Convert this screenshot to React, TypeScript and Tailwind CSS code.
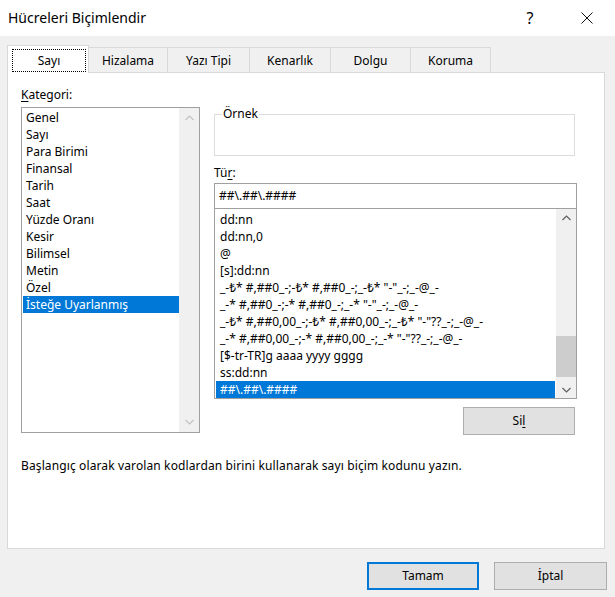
import React from "react";

const font = { fontFamily: '"Segoe UI", "Noto Sans", "Liberation Sans", sans-serif' };

const categories = [
  "Genel",
  "Sayı",
  "Para Birimi",
  "Finansal",
  "Tarih",
  "Saat",
  "Yüzde Oranı",
  "Kesir",
  "Bilimsel",
  "Metin",
  "Özel",
  "İsteğe Uyarlanmış",
];

const formats = [
  "dd:nn",
  "dd:nn,0",
  "@",
  "[s]:dd:nn",
  '_-₺* #,##0_-;-₺* #,##0_-;_-₺* "-"_-;_-@_-',
  '_-* #,##0_-;-* #,##0_-;_-* "-"_-;_-@_-',
  '_-₺* #,##0,00_-;-₺* #,##0,00_-;_-₺* "-"??_-;_-@_-',
  '_-* #,##0,00_-;-* #,##0,00_-;_-* "-"??_-;_-@_-',
  "[$-tr-TR]g aaaa yyyy gggg",
  "ss:dd:nn",
  "##\\.##\\.####",
];

const tabs = [
  { label: "Hizalama", w: "w-[79px]" },
  { label: "Yazı Tipi", w: "w-[82px]" },
  { label: "Kenarlık", w: "w-[81px]" },
  { label: "Dolgu", w: "w-[80px]" },
  { label: "Koruma", w: "w-[80px]" },
];

function Chevron({ up, color }: { up?: boolean; color: string }) {
  return (
    <svg width="9" height="6" viewBox="0 0 9 6">
      <polyline
        points={up ? "0.5,5 4.5,1 8.5,5" : "0.5,1 4.5,5 8.5,1"}
        fill="none"
        stroke={color}
        strokeWidth="1.2"
      />
    </svg>
  );
}

export default function App() {
  return (
    <div className="w-[615px] h-[597px] bg-[#f0f0f0] flex flex-col text-[12px] text-black overflow-hidden" style={font}>
      {/* Title bar */}
      <div className="h-[36px] bg-white flex items-center shrink-0">
        <span className="pl-[8px] text-[14px] leading-[20px]">Hücreleri Biçimlendir</span>
        <span className="ml-auto w-[20px] text-center text-[16px] leading-[20px] mr-[41px]">?</span>
        <svg width="12" height="12" viewBox="0 0 12 12" className="mr-[22px]">
          <path d="M0.5 0.5 L11.5 11.5 M11.5 0.5 L0.5 11.5" stroke="#111" strokeWidth="1" />
        </svg>
      </div>

      {/* Tabs */}
      <div className="mt-[9px] ml-[7px] flex items-end h-[27px]">
        <div className="relative z-10 -mb-px w-[82px] h-[28px] bg-white border border-b-0 border-[#d9d9d9]">
          <div className="ml-[4px] mt-[3px] w-[74px] h-[23px] border border-dotted border-black flex items-center justify-center">
            <span className="pt-[1px]">Sayı</span>
          </div>
        </div>
        {tabs.map((t) => (
          <div
            key={t.label}
            className={`${t.w} h-[25px] border-t border-r border-[#d9d9d9] flex items-center justify-center pt-[2px]`}
          >
            {t.label}
          </div>
        ))}
      </div>

      {/* Panel */}
      <div className="ml-[7px] w-[598px] h-[477px] bg-white border border-[#d9d9d9] pl-[13px] pt-[13px] flex flex-col shrink-0">
        <div className="flex gap-[14px]">
          {/* Left column */}
          <div className="w-[179px] flex flex-col">
            <div className="leading-[17px] h-[17px]">
              <span className="underline underline-offset-2">K</span>ategori:
            </div>
            <div className="mt-[4px] h-[326px] border border-[#a0a0a0] flex">
              <div className="flex-1 pt-[1px] pl-[1px]">
                {categories.map((c, i) => (
                  <div
                    key={c}
                    className={`h-[17px] leading-[17px] pl-[3px] ${i === categories.length - 1 ? "bg-[#0078d7] text-white" : ""}`}
                  >
                    {c}
                  </div>
                ))}
              </div>
              <div className="w-[20px] bg-[#f0f0f0] flex flex-col items-center justify-between py-[7px]">
                <Chevron up color="#c2c2c2" />
                <Chevron color="#c2c2c2" />
              </div>
            </div>
          </div>

          {/* Right column */}
          <div className="w-[363px] flex flex-col">
            <div className="relative mt-[28px] w-[361px] h-[42px] border border-[#dcdcdc]">
              <span className="absolute left-[7px] -top-[10px] bg-white px-[1px] leading-[17px]">Örnek</span>
            </div>
            <div className="mt-[8px] h-[17px] leading-[17px]">
              Tü<span className="underline underline-offset-2">r</span>:
            </div>
            <div className="mt-[2px] h-[26px] border border-[#a0a0a0] flex items-center pl-[4px]">
              ##\.##\.####
            </div>
            <div className="h-[190px] border border-t-0 border-[#a0a0a0] flex">
              <div className="flex-1 pt-[2px] px-[1px] overflow-hidden">
                {formats.map((f, i) => (
                  <div
                    key={f}
                    className={`h-[17px] leading-[17px] pl-[4px] whitespace-nowrap ${i === formats.length - 1 ? "bg-[#0078d7] text-white" : ""}`}
                  >
                    {f}
                  </div>
                ))}
              </div>
              <div className="w-[20px] bg-[#f0f0f0] flex flex-col">
                <div className="h-[17px] flex items-center justify-center">
                  <Chevron up color="#606060" />
                </div>
                <div className="flex-1 flex flex-col justify-end pb-[4px]">
                  <div className="h-[41px] bg-[#cdcdcd]" />
                </div>
                <div className="h-[17px] flex items-center justify-center">
                  <Chevron color="#606060" />
                </div>
              </div>
            </div>
            <button className="mt-[8px] ml-[249px] w-[112px] h-[28px] bg-[#e1e1e1] border border-[#adadad] flex items-center justify-center">
              <span>
                Si<span className="underline underline-offset-2">l</span>
              </span>
            </button>
          </div>
        </div>

        <div className="mt-[22px] leading-[17px] tracking-[0.12px]">
          Başlangıç olarak varolan kodlardan birini kullanarak sayı biçim kodunu yazın.
        </div>
      </div>

      {/* Footer buttons */}
      <div className="mt-[13px] flex justify-end pr-[8px] gap-[15px]">
        <button className="w-[112px] h-[28px] bg-[#e1e1e1] border-2 border-[#0078d7] flex items-center justify-center">
          Tamam
        </button>
        <button className="w-[113px] h-[28px] bg-[#e1e1e1] border border-[#adadad] flex items-center justify-center">
          İptal
        </button>
      </div>
    </div>
  );
}
